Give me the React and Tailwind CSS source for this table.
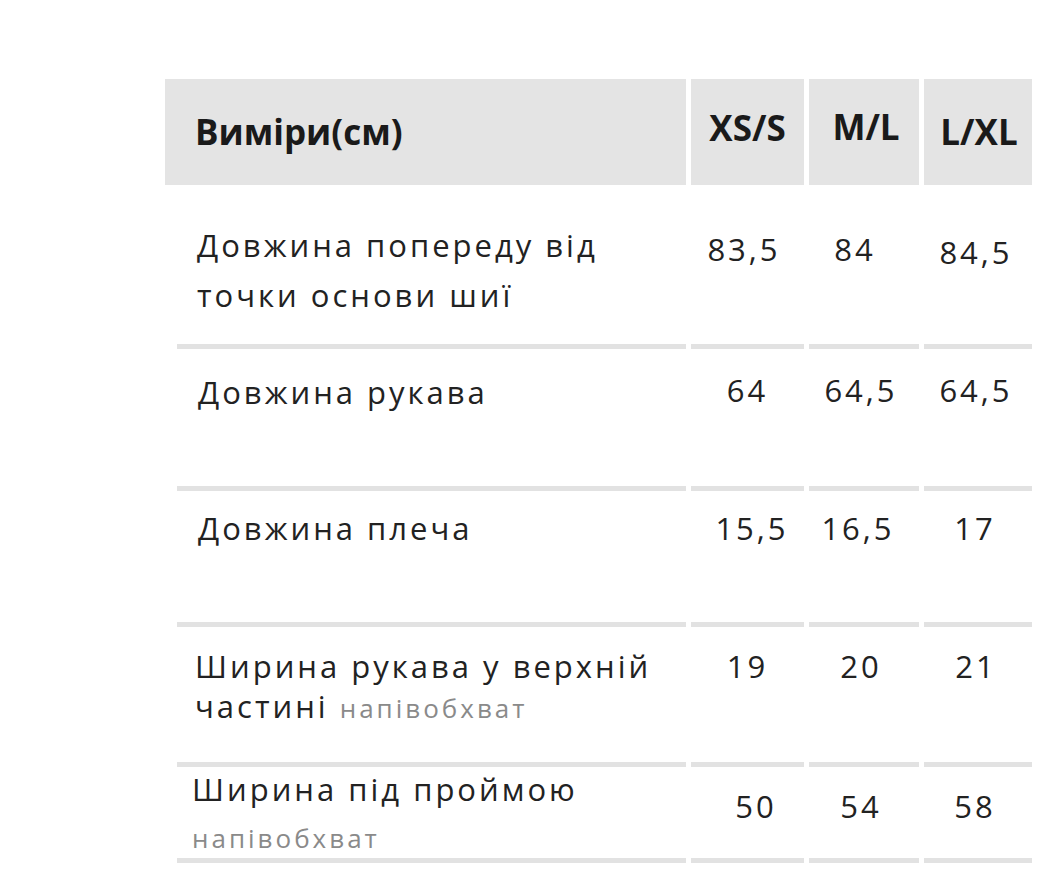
const body = "font-['Open_Sans',sans-serif] text-[31px] tracking-[3px] text-[#222]";
const head = "font-['Open_Sans',sans-serif] font-bold text-[35px] text-[#1a1a1a]";

const rows = [
  {
    h: 'h-[164px]',
    label: (
      <div className="pt-[35px] pl-[20px] leading-[50px]">
        Довжина попереду від
        <br />
        точки основи шиї
      </div>
    ),
    values: [
      ['83,5', 'pt-[44px] pr-[7px]'],
      ['84', 'pt-[44px] pr-[18px]'],
      ['84,5', 'pt-[47px] pr-[4px]'],
    ],
  },
  {
    h: 'h-[142px]',
    label: <div className="pt-[23px] pl-[21px] leading-[40px]">Довжина рукава</div>,
    values: [
      ['64', 'pt-[21px]'],
      ['64,5', 'pt-[21px] pr-[6px]'],
      ['64,5', 'pt-[21px] pr-[4px]'],
    ],
  },
  {
    h: 'h-[136px]',
    label: <div className="pt-[17px] pl-[21px] leading-[40px]">Довжина плеча</div>,
    values: [
      ['15,5', 'pt-[17px] pl-[9px]'],
      ['16,5', 'pt-[17px] pr-[12px]'],
      ['17', 'pt-[17px] pr-[6px]'],
    ],
  },
  {
    h: 'h-[140px]',
    label: (
      <div className="pt-[19px] pl-[18px] leading-[40px]">
        Ширина рукава у верхній
        <br />
        частині{' '}
        <span className="text-[26px] tracking-[3px] text-[#8a8a8a]">напівобхват</span>
      </div>
    ),
    values: [
      ['19', 'pt-[19px]'],
      ['20', 'pt-[19px] pr-[6px]'],
      ['21', 'pt-[19px] pr-[4px]'],
    ],
  },
  {
    h: 'h-[96px]',
    label: (
      <div className="pt-[2px] pl-[15px] leading-[40px]">
        <div>Ширина під проймою</div>
        <div className="mt-[9px] text-[26px] tracking-[3px] text-[#8a8a8a]">напівобхват</div>
      </div>
    ),
    values: [
      ['50', 'pt-[19px] pl-[17px]'],
      ['54', 'pt-[19px] pr-[6px]'],
      ['58', 'pt-[19px] pr-[6px]'],
    ],
  },
];

export default function App() {
  return (
    <div className="min-h-screen bg-white pt-[79px] pl-[165px]">
      <div className="grid grid-cols-[521px_113px_110px_108px] gap-x-[5px]">
        <div className={`h-[106px] bg-[#e4e4e4] flex items-center pl-[30px] ${head}`}>Виміри(см)</div>
        <div className={`h-[106px] bg-[#e4e4e4] flex items-center justify-center pb-[7px] ${head}`}>XS/S</div>
        <div className={`h-[106px] bg-[#e4e4e4] flex items-center justify-center pb-[9px] pl-[4px] ${head}`}>M/L</div>
        <div className={`h-[106px] bg-[#e4e4e4] flex items-center justify-center pl-[2px] ${head}`}>L/XL</div>

        {rows.map((row, i) => (
          <div key={i} className="contents">
            <div className={`${row.h} ml-[12px] border-b-[5px] border-[#e2e2e2] ${body}`}>{row.label}</div>
            {row.values.map(([v, cls], j) => (
              <div
                key={j}
                className={`${row.h} border-b-[5px] border-[#e2e2e2] text-center leading-[40px] ${body} ${cls}`}
              >
                {v}
              </div>
            ))}
          </div>
        ))}
      </div>
    </div>
  );
}
